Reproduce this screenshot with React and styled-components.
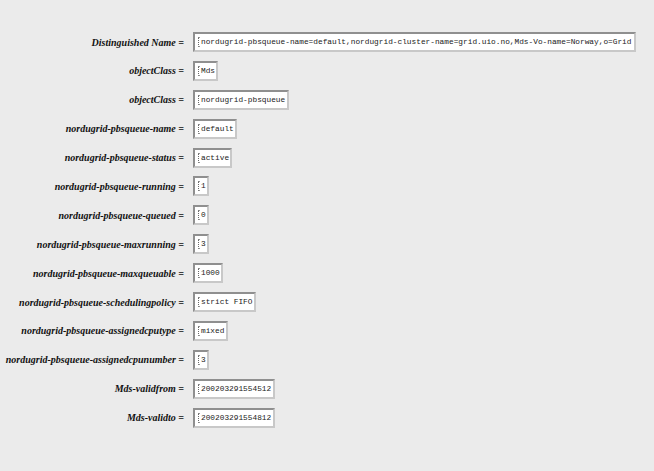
import React from 'react';
import styled, { createGlobalStyle } from 'styled-components';

const Global = createGlobalStyle`
    html, body {
        margin: 0;
        padding: 0;
        background: #ebebeb;
    }
`;

const Page = styled.div`
    width: 654px;
    height: 471px;
    background: #ebebeb;
    box-sizing: border-box;
    padding-top: 32px;
`;

const Table = styled.div`
    display: grid;
    grid-template-columns: 184px auto;
    grid-auto-rows: 20px;
    column-gap: 9px;
    row-gap: 8.9px;
    align-items: center;
`;

const Label = styled.div`
    text-align: right;
    white-space: nowrap;
    font-family: 'Liberation Serif', 'DejaVu Serif', serif;
    font-style: italic;
    font-weight: bold;
    font-size: 10px;
    color: #111;
`;

const Field = styled.div`
    box-sizing: border-box;
    width: ${(p) => p.$size * 4.7 + 11}px;
    height: 20px;
    display: flex;
    align-items: center;
    padding-left: 3px;
    background: #fff;
    border: 2px solid;
    border-color: #8f8f8f #c8c8c8 #c8c8c8 #8f8f8f;
    font-family: 'Liberation Mono', 'DejaVu Sans Mono', monospace;
    font-size: 7.8px;
    color: #222;
    white-space: nowrap;
    overflow: hidden;
`;

// dotted text cursor left in each field
const Caret = styled.span`
    display: inline-block;
    width: 2px;
    height: 10px;
    margin-right: 1px;
    border-left: 1px dotted #666;
    border-top: 1px solid #999;
    border-bottom: 1px solid #999;
    box-sizing: border-box;
    flex: none;
`;

const rows = [
    ['Distinguished Name', 'nordugrid-pbsqueue-name=default,nordugrid-cluster-name=grid.uio.no,Mds-Vo-name=Norway,o=Grid'],
    ['objectClass', 'Mds'],
    ['objectClass', 'nordugrid-pbsqueue'],
    ['nordugrid-pbsqueue-name', 'default'],
    ['nordugrid-pbsqueue-status', 'active'],
    ['nordugrid-pbsqueue-running', '1'],
    ['nordugrid-pbsqueue-queued', '0'],
    ['nordugrid-pbsqueue-maxrunning', '3'],
    ['nordugrid-pbsqueue-maxqueuable', '1000'],
    ['nordugrid-pbsqueue-schedulingpolicy', 'strict FIFO'],
    ['nordugrid-pbsqueue-assignedcputype', 'mixed'],
    ['nordugrid-pbsqueue-assignedcpunumber', '3'],
    ['Mds-validfrom', '200203291554512'],
    ['Mds-validto', '200203291554812'],
];

const App = () => {
    return (
        <Page>
            <Global />
            <Table>
                {rows.map(([name, value], i) => (
                    <React.Fragment key={i}>
                        <Label>{name} =</Label>
                        <div>
                            <Field $size={value.length}>
                                <Caret />
                                {value}
                            </Field>
                        </div>
                    </React.Fragment>
                ))}
            </Table>
        </Page>
    );
};

export default App;
